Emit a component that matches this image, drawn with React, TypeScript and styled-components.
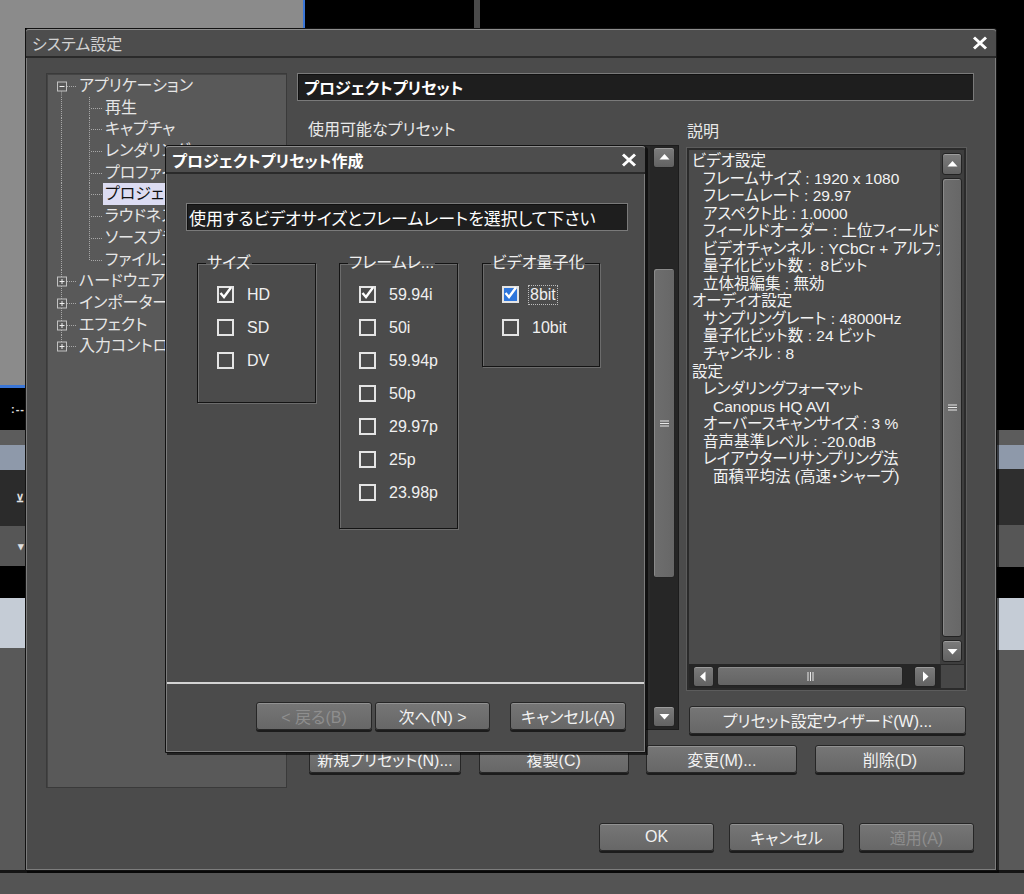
import React from "react"
import styled, { createGlobalStyle } from "styled-components"

const UI_FONT = `"Liberation Sans", "Noto Sans CJK JP", sans-serif`
const PANEL = "#4b4b4b"
const TEXT = "#ededed"

const GlobalStyle = createGlobalStyle`
  html, body {
    margin: 0;
    padding: 0;
    background: #000;
  }
  body {
    font-family: ${UI_FONT};
    font-feature-settings: "palt";
  }
  *, *::before, *::after {
    box-sizing: border-box;
  }
`

/**
 * Desktop behind the dialog (editor pieces peeking out)
 */
const Desktop = styled.div`
  position: relative;
  width: 1024px;
  height: 894px;
  overflow: hidden;
  display: grid;
  grid-template-columns: 25px 1fr 27px;
  grid-template-rows: 28px 1fr 24px;
  background: #000;
`

const TopStrip = styled.div`
  grid-column: 1 / -1;
  display: flex;
`

const SideStrip = styled.div`
  display: flex;
  flex-direction: column;
  overflow: hidden;
`

type StripeProps = { $w?: number; $h?: number; $bg: string }
const Stripe = styled.div<StripeProps>`
  flex: ${p => (p.$w || p.$h ? "none" : "1")};
  width: ${p => (p.$w ? `${p.$w}px` : "auto")};
  height: ${p => (p.$h ? `${p.$h}px` : "auto")};
  background: ${p => p.$bg};
  display: flex;
  align-items: center;
  justify-content: flex-end;
  color: #e0e0e0;
  font-size: 11px;
  font-weight: bold;
  letter-spacing: 1px;
  overflow: hidden;
  white-space: nowrap;
`

const BottomStrip = styled.div`
  grid-column: 1 / -1;
  background: #545454;
  border-top: 3px solid #151515;
`

/**
 * Dialog window frame
 */
const Window = styled.section<{ $left: number; $top: number; $width: number; $height: number }>`
  position: absolute;
  left: ${p => p.$left}px;
  top: ${p => p.$top}px;
  width: ${p => p.$width}px;
  height: ${p => p.$height}px;
  display: flex;
  flex-direction: column;
  background: ${PANEL};
  border: 1px solid #121212;
  border-radius: 3px 3px 0 0;
  box-shadow: inset 1px 0 0 #7c7c7c, inset -1px -1px 0 #7c7c7c, 2px 2px 0 rgba(0, 0, 0, 0.6);
  color: ${TEXT};
`

const TitleBar = styled.header<{ $height: number; $bold?: boolean }>`
  flex: none;
  height: ${p => p.$height}px;
  display: flex;
  align-items: center;
  justify-content: space-between;
  padding: 0 8px 0 6px;
  background: #4d4d4d;
  border-top: 1px solid #8e8e8e;
  border-bottom: 2px solid #2a2a2a;
  border-radius: 3px 3px 0 0;
  font-size: 16px;
  font-weight: ${p => (p.$bold ? "bold" : "normal")};
  color: ${p => (p.$bold ? "#ffffff" : "#d2d2d2")};
`

function CloseIcon() {
  return (
    <svg width="16" height="14" viewBox="0 0 16 14">
      <path d="M2 1.5 L14 12.5 M14 1.5 L2 12.5" stroke="#fff" strokeWidth="3" />
    </svg>
  )
}

const WindowBody = styled.div`
  flex: 1;
  display: flex;
  align-items: flex-start;
  padding: 15px 0 0 20px;
`

/**
 * Left category tree
 */
const TreePanel = styled.nav`
  flex: none;
  width: 241px;
  height: 715px;
  padding-top: 1px;
  background: #595959;
  border: 1px solid #3a3a3a;
  box-shadow: inset 1px 1px 0 #444;
  overflow: hidden;
`

const ROW_H = 21.7

const TreeRow = styled.div`
  height: ${ROW_H}px;
  display: flex;
  align-items: center;
  font-size: 16px;
  white-space: nowrap;
  color: #e6e6e6;
`

const TreeLabel = styled.span<{ $selected?: boolean }>`
  margin-left: -2px;
  padding: 0 2px;
  line-height: ${ROW_H}px;
  background: ${p => (p.$selected ? "#dcdcf2" : "transparent")};
  color: ${p => (p.$selected ? "#111" : "inherit")};
`

type TreeItem = {
  label: string
  child?: boolean
  expander?: "minus" | "plus"
  selected?: boolean
  first?: boolean
  last?: boolean
  lastChild?: boolean
}

const TREE: TreeItem[] = [
  { label: "アプリケーション", expander: "minus", first: true },
  { label: "再生", child: true },
  { label: "キャプチャ", child: true },
  { label: "レンダリング", child: true },
  { label: "プロファイル", child: true },
  { label: "プロジェクトプリセット", child: true, selected: true },
  { label: "ラウドネスメーター", child: true },
  { label: "ソースブラウザ", child: true },
  { label: "ファイルエクスポート", child: true, lastChild: true },
  { label: "ハードウェア", expander: "plus" },
  { label: "インポーター", expander: "plus" },
  { label: "エフェクト", expander: "plus" },
  { label: "入力コントローラー", expander: "plus", last: true },
]

const dotted = { stroke: "#a8a8a8", strokeWidth: 1, strokeDasharray: "1 1" }

function TreeGutter({ item }: { item: TreeItem }) {
  const h = ROW_H
  const mid = Math.round(h / 2) + 0.5
  if (item.child) {
    return (
      <svg width="58" height={h} style={{ flex: "none" }}>
        <line x1="14.5" y1="0" x2="14.5" y2={h} {...dotted} />
        <line x1="42.5" y1="0" x2="42.5" y2={item.lastChild ? mid : h} {...dotted} />
        <line x1="44" y1={mid} x2="56" y2={mid} {...dotted} />
      </svg>
    )
  }
  return (
    <svg width="32" height={h} style={{ flex: "none" }}>
      <line x1="14.5" y1={item.first ? mid : 0} x2="14.5" y2={item.last ? mid : h} {...dotted} />
      <line x1="20" y1={mid} x2="30" y2={mid} {...dotted} />
      <rect x="10.5" y={mid - 4.5} width="9" height="9" fill="#595959" stroke="#c2c2c2" />
      <line x1="12.5" y1={mid} x2="17.5" y2={mid} stroke="#eee" />
      {item.expander === "plus" && (
        <line x1="15" y1={mid - 2.5} x2="15" y2={mid + 2.5} stroke="#eee" />
      )}
    </svg>
  )
}

/**
 * Right side
 */
const RightPane = styled.div`
  flex: none;
  width: 677px;
  margin-left: 10px;
  display: flex;
  flex-direction: column;
`

const HeaderBox = styled.div<{ $bold?: boolean; $size: number; $pad: number }>`
  height: 28px;
  display: flex;
  align-items: center;
  padding-left: ${p => p.$pad}px;
  background: #1e1e1e;
  border: 1px solid #7a7a7a;
  box-shadow: inset 1px 1px 0 #111;
  font-size: ${p => p.$size}px;
  font-weight: ${p => (p.$bold ? "bold" : "normal")};
  color: #fff;
  white-space: nowrap;
`

const Columns = styled.div`
  display: flex;
  gap: 8px;
  margin-top: 20px;
  padding: 0 8px 0 11px;
`

const Column = styled.div<{ $width: number }>`
  width: ${p => p.$width}px;
  display: flex;
  flex-direction: column;
`

const FieldLabel = styled.div<{ $height: number; $pad?: number }>`
  height: ${p => p.$height}px;
  padding-top: ${p => p.$pad ?? 0}px;
  font-size: 16px;
  line-height: 18px;
  color: #e8e8e8;
`

const PresetList = styled.div`
  height: 585px;
  display: flex;
  justify-content: flex-end;
  background: #2b2b2b;
  border: 1px solid #1c1c1c;
`

const DescBox = styled.div`
  height: 542px;
  display: grid;
  grid-template-columns: 1fr 24px;
  grid-template-rows: 1fr 24px;
  border: 2px solid #2b2b2b;
  box-shadow: 0 0 0 1px #5c5c5c;
  background: ${PANEL};
`

const DescText = styled.div`
  padding: 2px 0 0 3px;
  overflow: hidden;
  font-size: 15.5px;
  line-height: 17.55px;
  color: #f2f2f2;
`

const DescLine = styled.div<{ $indent: number }>`
  padding-left: ${p => p.$indent}px;
  white-space: pre;
`

const DESC: [number, string][] = [
  [0, "ビデオ設定"],
  [11, "フレームサイズ : 1920 x 1080"],
  [11, "フレームレート : 29.97"],
  [11, "アスペクト比 : 1.0000"],
  [11, "フィールドオーダー : 上位フィールド"],
  [11, "ビデオチャンネル : YCbCr + アルファ"],
  [11, "量子化ビット数 :  8ビット"],
  [11, "立体視編集 : 無効"],
  [0, "オーディオ設定"],
  [11, "サンプリングレート : 48000Hz"],
  [11, "量子化ビット数 : 24 ビット"],
  [11, "チャンネル : 8"],
  [0, "設定"],
  [11, "レンダリングフォーマット"],
  [21, "Canopus HQ AVI"],
  [11, "オーバースキャンサイズ : 3 %"],
  [11, "音声基準レベル : -20.0dB"],
  [11, "レイアウターリサンプリング法"],
  [21, "面積平均法 (高速・シャープ)"],
]

/**
 * Scroll bars
 */
const VTrack = styled.div<{ $bg: string; $pad: string }>`
  display: flex;
  flex-direction: column;
  align-items: center;
  gap: 3px;
  padding: ${p => p.$pad};
  background: ${p => p.$bg};
`

const HTrack = styled.div`
  display: flex;
  align-items: center;
  padding: 0 4px;
  background: #262626;
`

const ScrollButton = styled.div<{ $w: number; $h: number; $gap?: number }>`
  flex: none;
  width: ${p => p.$w}px;
  height: ${p => p.$h}px;
  margin-left: ${p => p.$gap ?? 0}px;
  display: flex;
  align-items: center;
  justify-content: center;
  background: linear-gradient(#7c7c7c, #626262);
  border: 1px solid #232323;
  border-radius: 3px;
  box-shadow: inset 0 1px 0 #9c9c9c;
`

const Thumb = styled.div<{ $offset?: number; $size?: number; $w: number }>`
  flex: ${p => (p.$size ? "none" : "1")};
  width: ${p => p.$w}px;
  height: ${p => (p.$size ? `${p.$size}px` : "auto")};
  margin-top: ${p => p.$offset ?? 0}px;
  display: flex;
  align-items: center;
  justify-content: center;
  background: linear-gradient(90deg, #6e6e6e, #676767);
  border: 1px solid #232323;
  border-radius: 3px;
  box-shadow: inset 1px 1px 0 #8a8a8a;
`

const HThumb = styled.div`
  flex: 1;
  height: 20px;
  margin: 0 3px;
  display: flex;
  align-items: center;
  justify-content: center;
  background: linear-gradient(#727272, #646464);
  border: 1px solid #232323;
  border-radius: 3px;
  box-shadow: inset 0 1px 0 #8e8e8e;
`

const Spacer = styled.div`
  flex: 1;
`

const Corner = styled.div`
  background: #474747;
  border-left: 1px solid #2a2a2a;
  border-top: 1px solid #2a2a2a;
`

function Arrow({ dir }: { dir: "up" | "down" | "left" | "right" }) {
  const pts = {
    up: "0.5,7.5 5.5,2 10.5,7.5",
    down: "0.5,3 5.5,8.5 10.5,3",
    left: "7.5,0.5 2,5.5 7.5,10.5",
    right: "3,0.5 8.5,5.5 3,10.5",
  }[dir]
  return (
    <svg width="11" height="11" viewBox="0 0 11 11">
      <polygon points={pts} fill="#fff" />
    </svg>
  )
}

function GripV() {
  return (
    <svg width="9" height="7" viewBox="0 0 9 7">
      <path d="M0 1h9M0 3.5h9M0 6h9" stroke="#e8e8e8" strokeWidth="1" />
    </svg>
  )
}

function GripH() {
  return (
    <svg width="7" height="9" viewBox="0 0 7 9">
      <path d="M1 0v9M3.5 0v9M6 0v9" stroke="#e8e8e8" strokeWidth="1" />
    </svg>
  )
}

/**
 * Buttons
 */
const Button = styled.button<{ $width: number; $disabled?: boolean; $gap?: number }>`
  flex: none;
  width: ${p => p.$width}px;
  height: 28px;
  margin-left: ${p => p.$gap ?? 0}px;
  padding: 0;
  background: linear-gradient(#767676, #676767);
  border: 1px solid #262626;
  border-radius: 3px;
  box-shadow: inset 0 1px 0 #929292, 0 2px 0 #1c1c1c;
  font-family: ${UI_FONT};
  font-feature-settings: "palt";
  font-size: 16px;
  color: ${p => (p.$disabled ? "#8e8e8e" : "#f2f2f2")};
  white-space: nowrap;
`

const ButtonRow = styled.div<{ $top: number; $justify: string; $gap: number; $pad: string }>`
  display: flex;
  justify-content: ${p => p.$justify};
  gap: ${p => p.$gap}px;
  margin-top: ${p => p.$top}px;
  padding: ${p => p.$pad};
`

/**
 * Project preset wizard
 */
const WizardBody = styled.div`
  flex: 1;
  display: flex;
  flex-direction: column;
  padding: 29px 17px 0 20px;
`

const Groups = styled.div`
  display: flex;
  align-items: flex-start;
  gap: 23px;
  margin-top: 24px;
  padding-left: 11px;
`

const GroupBox = styled.fieldset<{ $width: number; $height: number; $gap?: number }>`
  margin: 0 0 0 ${p => p.$gap ?? 0}px;
  padding: 7px 0 0 19px;
  min-width: 0;
  width: ${p => p.$width}px;
  height: ${p => p.$height}px;
  border: 1px solid #141414;
  box-shadow: inset 1px 1px 0 #6c6c6c, 1px 1px 0 #6c6c6c;
`

const Legend = styled.legend`
  margin-left: -11px;
  padding: 0 1px;
  font-size: 16px;
  line-height: 16px;
  color: #f0f0f0;
  white-space: nowrap;
`

const CheckRow = styled.div`
  height: 33px;
  display: flex;
  align-items: center;
  gap: 11px;
  font-size: 16px;
  color: #f0f0f0;
`

const CheckBox = styled.span<{ $accent?: boolean }>`
  flex: none;
  width: 17px;
  height: 17px;
  display: flex;
  align-items: center;
  justify-content: center;
  border: 2px solid #e4e4e4;
  background: ${p => (p.$accent ? "#2e76dc" : "transparent")};
`

const CheckText = styled.span<{ $focus?: boolean }>`
  padding: 0 1px;
  margin-left: ${p => (p.$focus ? "-2px" : "0")};
  border: 1px dotted ${p => (p.$focus ? "#bdbdbd" : "transparent")};
  line-height: 18px;
`

const Separator = styled.div`
  height: 2px;
  margin: 0 1px;
  background: #d4d4d4;
`

function Check({ label, checked, accent, focus }: { label: string; checked?: boolean; accent?: boolean; focus?: boolean }) {
  return (
    <CheckRow>
      <CheckBox $accent={accent}>
        {checked && (
          <svg width="13" height="13" viewBox="0 0 13 13" style={{ marginTop: -3 }}>
            <polyline points="1.5,6 5,10 12,0.5" fill="none" stroke="#fff" strokeWidth="2.4" />
          </svg>
        )}
      </CheckBox>
      <CheckText $focus={focus}>{label}</CheckText>
    </CheckRow>
  )
}

function VScroll(props: { bg: string; pad: string; thumbOffset?: number; thumbSize?: number; btnW: number; btnH: number }) {
  return (
    <VTrack $bg={props.bg} $pad={props.pad}>
      <ScrollButton $w={props.btnW} $h={props.btnH}>
        <Arrow dir="up" />
      </ScrollButton>
      <Thumb $w={props.btnW} $offset={props.thumbOffset} $size={props.thumbSize}>
        <GripV />
      </Thumb>
      {props.thumbSize ? <Spacer /> : null}
      <ScrollButton $w={props.btnW} $h={props.btnH}>
        <Arrow dir="down" />
      </ScrollButton>
    </VTrack>
  )
}

export default function App() {
  return (
    <>
      <GlobalStyle />
      <Desktop>
        <TopStrip>
          <Stripe $w={303} $bg="#8b8b8b" />
          <Stripe $w={2} $bg="#3b76d6" />
          <Stripe $w={169} $bg="#000" />
          <Stripe $w={6} $bg="#4a4a4a" />
          <Stripe $bg="#000" />
        </TopStrip>

        <SideStrip>
          <Stripe $h={357} $bg="#8b8b8b" />
          <Stripe $h={3} $bg="#3b76d6" />
          <Stripe $h={42} $bg="#000">:--</Stripe>
          <Stripe $h={15} $bg="#5c5c5c" />
          <Stripe $h={25} $bg="#8e99aa" />
          <Stripe $h={56} $bg="#2b2b2b">⊻</Stripe>
          <Stripe $h={40} $bg="#565656">▾</Stripe>
          <Stripe $h={32} $bg="#000" />
          <Stripe $h={50} $bg="#c5ccd6" />
          <Stripe $bg="#595959" />
        </SideStrip>
        <div />
        <SideStrip>
          <Stripe $h={402} $bg="#000" />
          <Stripe $h={15} $bg="#5c5c5c" />
          <Stripe $h={24} $bg="#8e99aa" />
          <Stripe $h={56} $bg="#2e2e2e" />
          <Stripe $h={42} $bg="#565656" />
          <Stripe $h={31} $bg="#000" />
          <Stripe $h={52} $bg="#c5ccd6" />
          <Stripe $bg="#595959" />
        </SideStrip>
        <BottomStrip />

        <Window $left={25} $top={28} $width={972} $height={843}>
          <TitleBar $height={29}>
            <span>システム設定</span>
            <CloseIcon />
          </TitleBar>
          <WindowBody>
            <TreePanel>
              {TREE.map(item => (
                <TreeRow key={item.label}>
                  <TreeGutter item={item} />
                  <TreeLabel $selected={item.selected}>{item.label}</TreeLabel>
                </TreeRow>
              ))}
            </TreePanel>

            <RightPane>
              <HeaderBox $bold $size={16} $pad={6}>プロジェクトプリセット</HeaderBox>
              <Columns>
                <Column $width={371}>
                  <FieldLabel $height={24}>使用可能なプリセット</FieldLabel>
                  <PresetList>
                    <VScroll bg="#262626" pad="1px 3px 2px 3px" btnW={22} btnH={21} thumbOffset={97} thumbSize={310} />
                  </PresetList>
                </Column>
                <Column $width={279}>
                  <FieldLabel $height={27} $pad={2}>説明</FieldLabel>
                  <DescBox>
                    <DescText>
                      {DESC.map(([indent, text], i) => (
                        <DescLine key={i} $indent={indent}>{text}</DescLine>
                      ))}
                    </DescText>
                    <VScroll bg="#3e3e3e" pad="3px 0 2px 0" btnW={20} btnH={22} />
                    <HTrack>
                      <ScrollButton $w={21} $h={21}>
                        <Arrow dir="left" />
                      </ScrollButton>
                      <HThumb>
                        <GripH />
                      </HThumb>
                      <ScrollButton $w={22} $h={21} $gap={8}>
                        <Arrow dir="right" />
                      </ScrollButton>
                    </HTrack>
                    <Corner />
                  </DescBox>
                  <ButtonRow $top={16} $justify="flex-start" $gap={0} $pad="0 0 0 2px">
                    <Button $width={277}>プリセット設定ウィザード(W)...</Button>
                  </ButtonRow>
                </Column>
              </Columns>
              <ButtonRow $top={11} $justify="space-between" $gap={0} $pad="0 9px 0 12px">
                <Button $width={152}>新規プリセット(N)...</Button>
                <Button $width={150}>複製(C)</Button>
                <Button $width={151}>変更(M)...</Button>
                <Button $width={150}>削除(D)</Button>
              </ButtonRow>
              <ButtonRow $top={50} $justify="flex-end" $gap={15} $pad="0">
                <Button $width={115}>OK</Button>
                <Button $width={115}>キャンセル</Button>
                <Button $width={115} $disabled>適用(A)</Button>
              </ButtonRow>
            </RightPane>
          </WindowBody>
        </Window>

        <Window $left={165} $top={145} $width={481} $height={608}>
          <TitleBar $height={28} $bold>
            <span>プロジェクトプリセット作成</span>
            <CloseIcon />
          </TitleBar>
          <WizardBody>
            <HeaderBox $size={17} $pad={2}>使用するビデオサイズとフレームレートを選択して下さい</HeaderBox>
            <Groups>
              <GroupBox $width={119} $height={148}>
                <Legend>サイズ</Legend>
                <Check label="HD" checked />
                <Check label="SD" />
                <Check label="DV" />
              </GroupBox>
              <GroupBox $width={119} $height={274}>
                <Legend>フレームレ...</Legend>
                <Check label="59.94i" checked />
                <Check label="50i" />
                <Check label="59.94p" />
                <Check label="50p" />
                <Check label="29.97p" />
                <Check label="25p" />
                <Check label="23.98p" />
              </GroupBox>
              <GroupBox $width={118} $height={112} $gap={1}>
                <Legend>ビデオ量子化</Legend>
                <Check label="8bit" checked accent focus />
                <Check label="10bit" />
              </GroupBox>
            </Groups>
          </WizardBody>
          <Separator />
          <ButtonRow $top={0} $justify="flex-end" $gap={3} $pad="18px 19px 22px 0">
            <Button $width={116} $disabled>&lt; 戻る(B)</Button>
            <Button $width={115}>次へ(N) &gt;</Button>
            <Button $width={116} $gap={17}>キャンセル(A)</Button>
          </ButtonRow>
        </Window>
      </Desktop>
    </>
  )
}
